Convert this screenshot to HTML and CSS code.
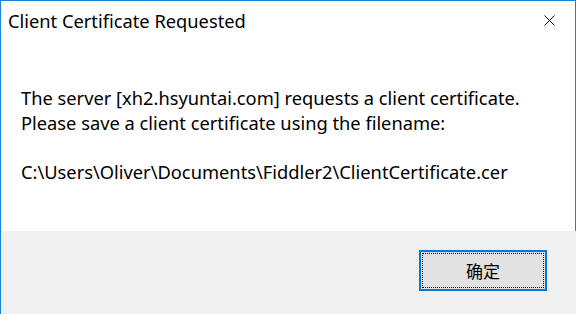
FILE: index.html
```html
<!DOCTYPE html>
<html lang="en">
<head>
    <meta charset="UTF-8">
    <meta name="viewport" content="width=device-width, initial-scale=1.0">
    <title>Client Certificate Requested</title>
    <link rel="stylesheet" href="styles.css">
</head>
<body>
    <div class="window">
        <!-- Barra de título -->
        <div class="titlebar">
            <span class="title">Client Certificate Requested</span>
            <span class="close">
                <svg width="11" height="11" viewBox="0 0 11 11">
                    <path d="M0.5 0.5 L10.5 10.5 M10.5 0.5 L0.5 10.5" stroke="#000" stroke-width="1" fill="none"/>
                </svg>
            </span>
        </div>

        <!-- Mensaje -->
        <div class="content">
            <p>The server [xh2.hsyuntai.com] requests a client certificate.<br>
            Please save a client certificate using the filename:</p>
            <p>C:\Users\Oliver\Documents\Fiddler2\ClientCertificate.cer</p>
        </div>

        <!-- Botones -->
        <div class="footer">
            <button class="ok">确定</button>
        </div>
    </div>
</body>
</html>
```

FILE: styles.css
```css
/* Estilos Generales */
html, body {
    margin: 0;
    padding: 0;
    height: 100%;
}

body {
    font-family: "Noto Sans", "Noto Sans CJK SC", sans-serif;
    color: #000;
    background-color: #fff;
}

/* Ventana */
.window {
    height: 100%;
    box-sizing: border-box;
    border-left: 1px solid #1883d7;
    border-top: 1px solid #1883d7;
    display: flex;
    flex-direction: column;
}

.titlebar {
    height: 38px;
    display: flex;
    align-items: center;
    justify-content: space-between;
    padding-left: 7px;
    border-right: 1px solid #1883d7;
}

.title {
    font-size: 18.3px;
}

.close {
    width: 46px;
    height: 38px;
    display: flex;
    align-items: center;
    justify-content: center;
    margin-right: 3px;
}

.content {
    height: 192px;
    padding: 46px 0 0 20px;
    box-sizing: border-box;
    font-size: 18.3px;
    line-height: 25px;
    border-right: 1px solid #1883d7;
}

.content p {
    margin: 0 0 24px 0;
}

/* Pie con botón */
.footer {
    flex: 1;
    background-color: #f0f0f0;
    display: flex;
    justify-content: flex-end;
    align-items: flex-start;
    padding: 19px 29px 0 0;
}

.ok {
    width: 128px;
    height: 41px;
    background-color: #e1e1e1;
    border: 2px solid #0078d7;
    font-family: "Noto Sans CJK SC", sans-serif;
    font-size: 17px;
    color: #000;
    outline: 1px dotted #000;
    outline-offset: -4px;
    padding: 0;
}
```
